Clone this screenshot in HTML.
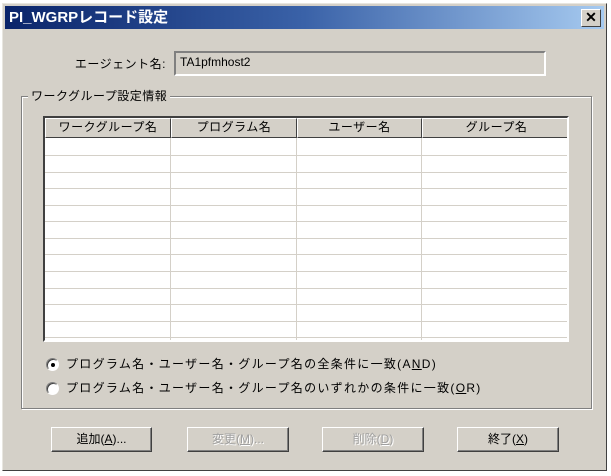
<!DOCTYPE html>
<html><head><meta charset="utf-8">
<style>
*{margin:0;padding:0;box-sizing:border-box}
body{width:611px;height:476px;background:#fff;position:relative;overflow:hidden;font-family:"Liberation Sans","Noto Sans CJK JP",sans-serif;font-size:12px;color:#000}
.abs{position:absolute}
#win{left:2px;top:3px;width:605px;height:468px;background:#d4d0c8;border:1px solid;border-color:#e8e6e0 #404040 #404040 #e8e6e0}
#title{left:5px;top:6px;width:599px;height:23px;background:linear-gradient(to right,#0a246a 0%,#3a62a8 50%,#a6caf0 100%);color:#fff;font-weight:bold;font-size:15px;line-height:23px;padding-left:4px}
#close{left:581px;top:9px;width:20px;height:18px;background:#d4d0c8;border:1px solid;border-color:#fff #404040 #404040 #fff;font-weight:bold;font-size:14px;line-height:15px;text-align:center}
.field{left:174px;top:51px;width:372px;height:25px;border:2px solid;border-color:#808080 #fff #fff #808080;background:#d4d0c8;padding-left:4px;line-height:19px;font-size:12px}
.grp{left:21px;top:96px;width:571px;height:313px;border:1px solid #808080;box-shadow:1px 1px 0 #fff inset,1px 1px 0 #fff}
.grpl{left:28px;top:88px;background:#d4d0c8;padding:0 3px;font-size:12px;line-height:16px;letter-spacing:0.5px}
#tbl{left:43px;top:116px;width:526px;height:226px;border:2px solid;border-color:#404040 #fff #fff #404040;background:#fff;overflow:hidden}
.hd{position:absolute;top:0;height:20px;background:#d4d0c8;border:1px solid;border-color:#fff #404040 #404040 #fff;text-align:center;line-height:17px;font-size:12px;letter-spacing:0.5px}
.hl{position:absolute;left:0;width:100%;height:1px;background:#d4d0c8}
.vl{position:absolute;top:20px;bottom:0;width:1px;background:#d4d0c8}
.radio{width:13px;height:13px;border-radius:50%;background:#fff;border:1px solid;border-color:#808080 #fff #fff #808080;box-shadow:inset 1px 1px 0 #404040}
.dot{left:4px;top:4px;width:4px;height:4px;border-radius:50%;background:#000}
.rt{font-size:12px;line-height:16px;letter-spacing:1.3px}
.btn{top:427px;height:25px;background:#d4d0c8;border:1px solid;border-color:#fff #404040 #404040 #fff;box-shadow:inset -1px -1px 0 #808080;text-align:center;line-height:22px;font-size:12px}
.dis{color:#a0a0a0;text-shadow:1px 1px 0 #fff}
u{text-decoration:underline}
</style></head><body>
<div id="win" class="abs"></div>
<div id="title" class="abs">PI_WGRPレコード設定</div>
<div id="close" class="abs">✕</div>
<div class="abs" style="left:60px;width:106px;text-align:right;top:56px;line-height:16px;letter-spacing:0.5px">エージェント名:</div>
<div class="abs field">TA1pfmhost2</div>
<div class="abs grp"></div>
<div class="abs grpl">ワークグループ設定情報</div>
<div id="tbl" class="abs">
<div class="hd" style="left:0;width:126px">ワークグループ名</div>
<div class="hd" style="left:126px;width:126px">プログラム名</div>
<div class="hd" style="left:252px;width:125px">ユーザー名</div>
<div class="hd" style="left:377px;width:149px">グループ名</div>
<div class="vl" style="left:125px"></div>
<div class="vl" style="left:251px"></div>
<div class="vl" style="left:376px"></div>
<div class="hl" style="top:37px"></div>
<div class="hl" style="top:54px"></div>
<div class="hl" style="top:70px"></div>
<div class="hl" style="top:87px"></div>
<div class="hl" style="top:103px"></div>
<div class="hl" style="top:120px"></div>
<div class="hl" style="top:136px"></div>
<div class="hl" style="top:153px"></div>
<div class="hl" style="top:170px"></div>
<div class="hl" style="top:186px"></div>
<div class="hl" style="top:203px"></div>
<div class="hl" style="top:219px"></div>
</div>
<div class="abs radio" style="left:46px;top:358px"><div class="abs dot"></div></div>
<div class="abs rt" style="left:66px;top:356px">プログラム名・ユーザー名・グループ名の全条件に一致(A<u>N</u>D)</div>
<div class="abs radio" style="left:46px;top:382px"></div>
<div class="abs rt" style="left:66px;top:380px">プログラム名・ユーザー名・グループ名のいずれかの条件に一致(<u>O</u>R)</div>
<div class="abs btn" style="left:51px;width:101px">追加(<u>A</u>)...</div>
<div class="abs btn dis" style="left:187px;width:102px">変更(<u>M</u>)...</div>
<div class="abs btn dis" style="left:322px;width:102px">削除(<u>D</u>)</div>
<div class="abs btn" style="left:457px;width:102px">終了(<u>X</u>)</div>
</body></html>
